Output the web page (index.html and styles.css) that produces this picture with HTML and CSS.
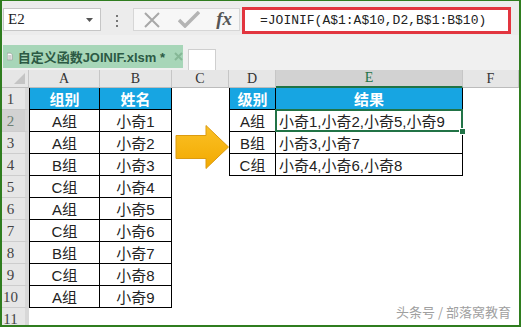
FILE: index.html
```html
<!DOCTYPE html>
<html lang="zh">
  <head>
    <meta charset="UTF-8" />
    <title>自定义函数JOINIF</title>
    <link rel="stylesheet" href="styles.css">
  </head>
  <body>
    <div class="window">
      <!-- formula bar -->
      <div class="formula-bar">
        <div class="name-box">
          <span>E2</span>
          <svg class="drop" width="7" height="4" viewBox="0 0 7 4"><path d="M0 0h7L3.5 4z" fill="#555"/></svg>
        </div>
        <div class="dots"><i></i><i></i><i></i></div>
        <div class="buttons">
          <svg width="18" height="16" viewBox="0 0 18 16"><path d="M2 1l14 14M16 1L2 15" stroke="#a8a8a8" stroke-width="2" fill="none"/></svg>
          <svg width="22" height="17" viewBox="0 0 22 17"><path d="M1 9l6 6L21 1" stroke="#b4b4b4" stroke-width="3.5" fill="none"/></svg>
          <span class="fx">fx</span>
        </div>
        <div class="formula">=JOINIF(A$1:A$10,D2,B$1:B$10)</div>
      </div>

      <!-- workbook tab -->
      <div class="tabs">
        <div class="tab">
          <svg width="10" height="13" viewBox="0 0 10 13"><path d="M0.5 0.5h6l3 3v9h-9z" fill="#fff" stroke="#8a8a8a"/><path d="M2 5h6M2 7h6M2 9h6M2 11h6" stroke="#9a9a9a"/></svg>
          <span>自定义函数JOINIF.xlsm *</span>
          <svg class="close" width="9" height="9" viewBox="0 0 9 9"><path d="M1 1l7 7M8 1L1 8" stroke="#86b896" stroke-width="2"/></svg>
        </div>
        <div class="new-tab"></div>
      </div>

      <!-- sheet -->
      <div class="sheet">
        <div class="corner"><i></i></div>
        <div class="ch">A</div><div class="ch">B</div><div class="ch">C</div><div class="ch">D</div><div class="ch sel">E</div><div class="ch">F</div>

        <div class="rh">1</div><div class="t l h">组别</div><div class="t h">姓名</div><div></div><div class="t l h">级别</div><div class="t h">结果</div><div></div>
        <div class="rh sel">2</div><div class="t l">A组</div><div class="t">小奇1</div><div></div><div class="t l">A组</div><div class="t e active">小奇1,小奇2,小奇5,小奇9</div><div></div>
        <div class="rh">3</div><div class="t l">A组</div><div class="t">小奇2</div><div></div><div class="t l">B组</div><div class="t e">小奇3,小奇7</div><div></div>
        <div class="rh">4</div><div class="t l">B组</div><div class="t">小奇3</div><div></div><div class="t l">C组</div><div class="t e">小奇4,小奇6,小奇8</div><div></div>
        <div class="rh">5</div><div class="t l">C组</div><div class="t">小奇4</div><div></div><div></div><div></div><div></div>
        <div class="rh">6</div><div class="t l">A组</div><div class="t">小奇5</div><div></div><div></div><div></div><div></div>
        <div class="rh">7</div><div class="t l">C组</div><div class="t">小奇6</div><div></div><div></div><div></div><div></div>
        <div class="rh">8</div><div class="t l">B组</div><div class="t">小奇7</div><div></div><div></div><div></div><div></div>
        <div class="rh">9</div><div class="t l">C组</div><div class="t">小奇8</div><div></div><div></div><div></div><div></div>
        <div class="rh">10</div><div class="t l">A组</div><div class="t">小奇9</div><div></div><div></div><div></div><div></div>
        <div class="rh">11</div><div></div><div></div><div></div><div></div><div></div><div></div>

        <svg class="arrow" width="55" height="46" viewBox="0 0 55 46">
          <defs>
            <linearGradient id="g" x1="0" y1="0" x2="0" y2="1">
              <stop offset="0" stop-color="#fbc126"/>
              <stop offset="1" stop-color="#f2a900"/>
            </linearGradient>
          </defs>
          <path d="M1 11.5h30V1.5L53.5 23 31 44.5v-10H1z" fill="url(#g)" stroke="#dc9b10"/>
        </svg>
      </div>

      <div class="watermark">头条号 / 部落窝教育</div>
    </div>
  </body>
</html>
```

FILE: styles.css
```css
body {
  margin: 0;
  font-family: "Liberation Sans", "Noto Sans CJK SC", sans-serif;
  background: #fff;
}

.window {
  position: relative;
  width: 521px;
  height: 327px;
  box-sizing: border-box;
  border: 2px solid #2f7d1f;
  border-top-width: 1px;
  background: #fff;
  overflow: hidden;
}

/* formula bar */
.formula-bar {
  height: 34px;
  display: flex;
  align-items: flex-start;
  background: #ececec;
}

.name-box {
  width: 98px;
  height: 23px;
  margin: 7px 0 0 1px;
  box-sizing: border-box;
  border: 1px solid #c6c6c6;
  background: #fff;
  display: flex;
  align-items: center;
  justify-content: space-between;
  padding: 0 7px 0 4px;
  font-family: "Liberation Serif", serif;
  font-size: 15px;
  color: #222;
}

.dots {
  width: 32px;
  margin-top: 14px;
  display: flex;
  flex-direction: column;
  align-items: center;
  gap: 3px;
}

.dots i {
  width: 2px;
  height: 2px;
  background: #777;
}

.buttons {
  width: 107px;
  height: 23px;
  margin-top: 7px;
  box-sizing: border-box;
  border: 1px solid #d6d6d6;
  background: #f7f7f7;
  display: flex;
  align-items: center;
  justify-content: space-between;
  padding: 0 7px 0 9px;
}

.fx {
  font-family: "Liberation Serif", serif;
  font-style: italic;
  font-weight: bold;
  font-size: 19px;
  color: #555;
  margin-bottom: 2px;
}

.formula {
  width: 269px;
  height: 27px;
  margin: 6px 0 0 2px;
  box-sizing: border-box;
  border: 3px solid #e2353f;
  background: #fff;
  padding-left: 15px;
  font-family: "Liberation Mono", monospace;
  font-size: 13px;
  line-height: 21px;
  color: #222;
}

/* tab row */
.tabs {
  height: 35px;
  display: flex;
  align-items: flex-start;
  background: #f0f0f0;
}

.tab {
  width: 180px;
  height: 23px;
  margin: 10px 0 0 1px;
  box-sizing: border-box;
  background: #a7d6b8;
  display: flex;
  align-items: center;
  gap: 5px;
  padding-left: 4px;
  white-space: nowrap;
  font-family: "Liberation Sans", "Noto Sans CJK SC", sans-serif;
  font-weight: bold;
  font-size: 13px;
  color: #2c5a44;
}

.tab .close {
  margin-left: 4px;
  flex: none;
}

.new-tab {
  width: 26px;
  height: 20px;
  margin: 14px 0 0 5px;
  border: 1px solid #cfcfcf;
  background: #fff;
}

/* sheet grid */
.sheet {
  position: relative;
  display: grid;
  grid-template-columns: 27px 71px 72px 57px 47px 187px 1fr;
  grid-template-rows: 18px;
  grid-auto-rows: 22px;
}

.sheet > div {
  box-sizing: border-box;
  display: flex;
  align-items: center;
  justify-content: center;
  font-size: 15px;
  color: #222;
}

.corner {
  position: relative;
  background: #e6e6e6;
  border-right: 1px solid #c6c6c6;
  border-bottom: 1px solid #bcbcbc;
}

.corner i {
  position: absolute;
  right: 3px;
  bottom: 3px;
  width: 11px;
  height: 11px;
  background: #c4c4c4;
  clip-path: polygon(100% 0, 100% 100%, 0 100%);
}

.sheet > .ch {
  background: #e6e6e6;
  border-right: 1px solid #c6c6c6;
  border-bottom: 1px solid #bcbcbc;
  font-family: "Liberation Serif", serif;
  font-size: 14px;
  color: #333;
}

.sheet > .ch.sel {
  background: #d2d2d2;
  color: #217346;
  border-bottom: 2px solid #217346;
}

.sheet > .rh {
  background: #e6e6e6;
  border-right: 4px solid #d8d8d8;
  border-bottom: 1px solid #cdcdcd;
  align-items: flex-end;
  justify-content: center;
  padding: 0 6px 1px 0;
  font-family: "Liberation Serif", serif;
  font-size: 15px;
  color: #444;
}

.sheet > .rh.sel {
  background: #d2d2d2;
  color: #6c7f72;
}

.sheet > .t {
  border-right: 1px solid #000;
  border-bottom: 1px solid #000;
}

.sheet > .l {
  border-left: 1px solid #000;
}

.sheet > .h {
  background: #17a5e2;
  color: #fff;
  font-weight: bold;
}

.sheet > .e {
  justify-content: flex-start;
  padding-left: 3px;
}

.sheet > .active {
  position: relative;
}

.active::after {
  content: "";
  position: absolute;
  left: -1px;
  top: -1px;
  right: -1px;
  bottom: -1px;
  border: 2px solid #217346;
}

.active::before {
  content: "";
  position: absolute;
  right: -4px;
  bottom: -4px;
  width: 5px;
  height: 5px;
  background: #217346;
  border: 1px solid #fff;
  z-index: 1;
}

.arrow {
  position: absolute;
  left: 173px;
  top: 54px;
}

.watermark {
  position: absolute;
  right: 8px;
  bottom: 4px;
  font-family: "Noto Sans CJK SC", sans-serif;
  font-size: 13px;
  color: #a0a0a0;
}
```
